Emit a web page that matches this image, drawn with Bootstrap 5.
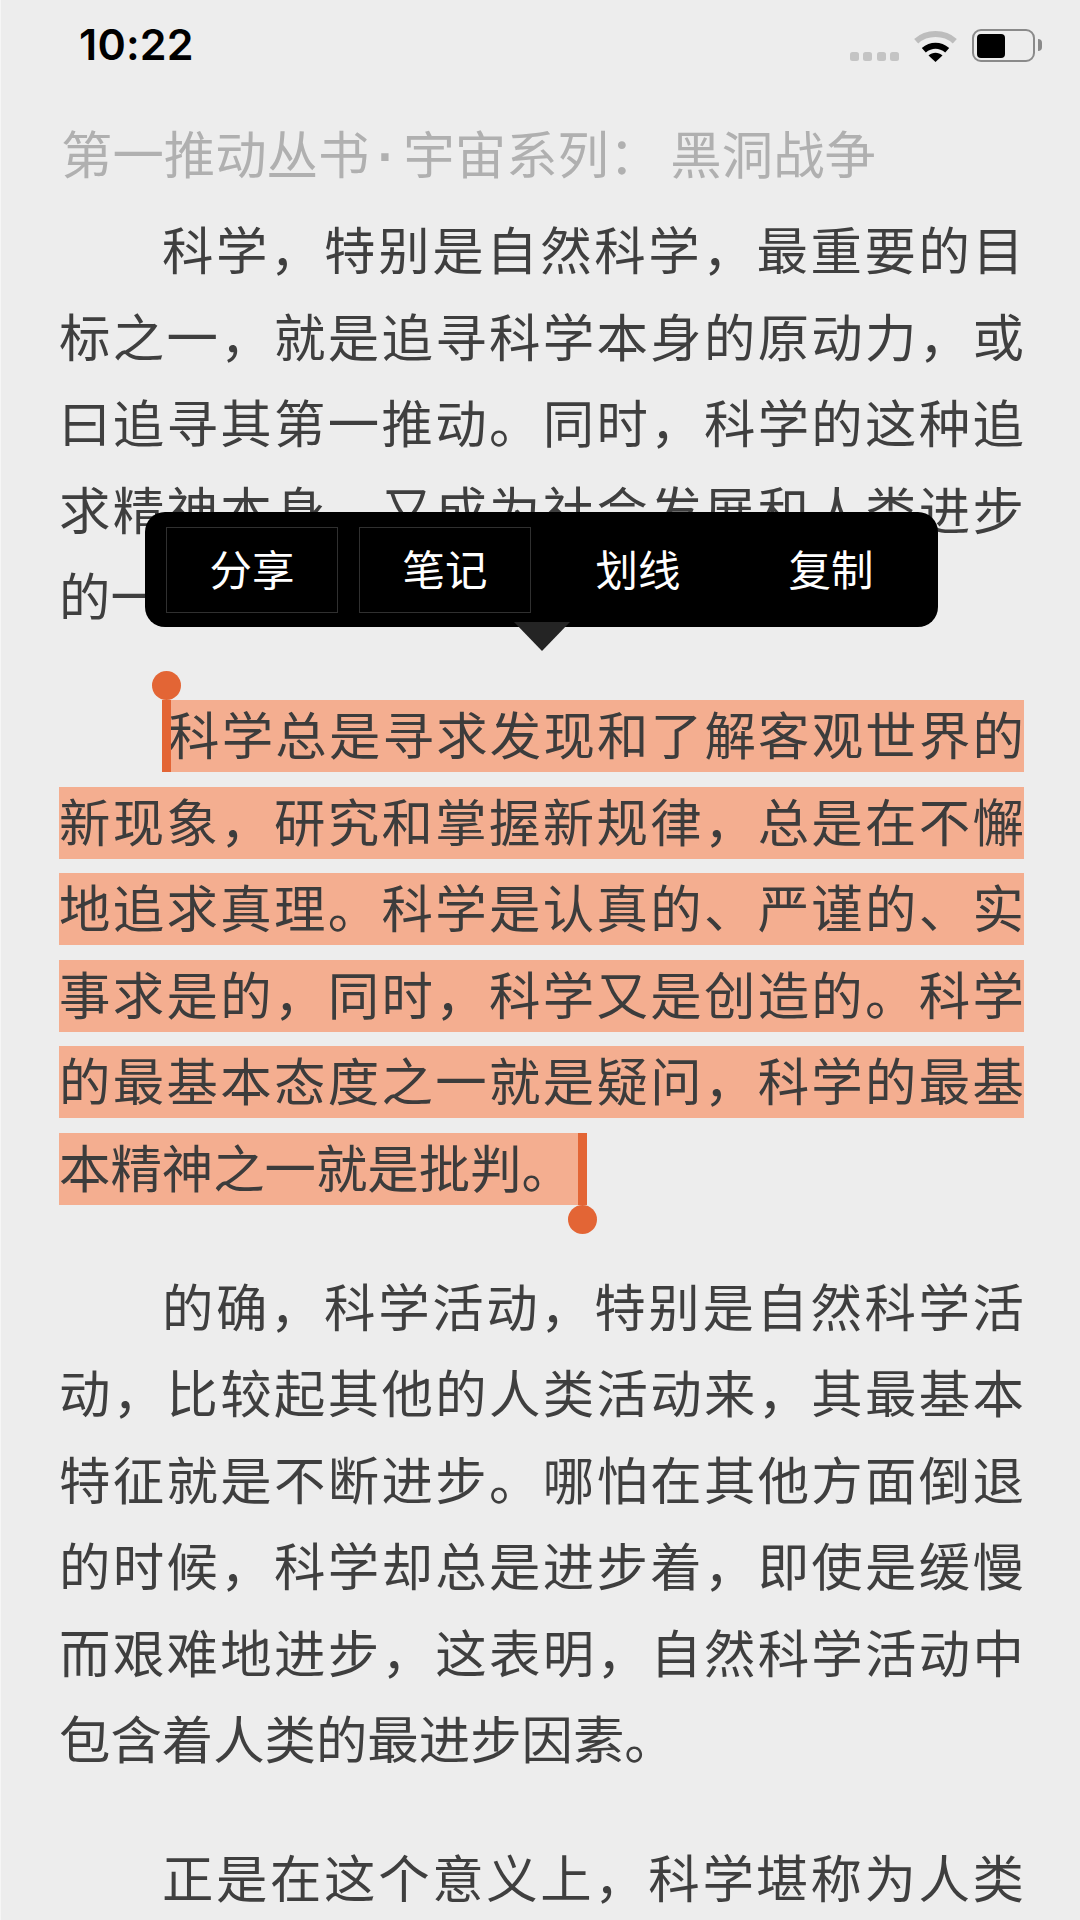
<!DOCTYPE html>
<html lang="zh-CN">
<head>
<meta charset="utf-8">
<title>阅读</title>
<link href="https://cdn.jsdelivr.net/npm/bootstrap@5.3.0/dist/css/bootstrap.min.css" rel="stylesheet">
<style>
html,body{margin:0;height:1920px;overflow:hidden;background:#ededed}
.reader{width:1080px;height:1920px;overflow:hidden;background:#ededed;color:#3f3f3f;font-family:"Noto Sans CJK SC","Liberation Sans",sans-serif;box-shadow:inset 1px 0 #f6f6f6}
.sbar{height:120px;padding:22px 38px 0 79px}
.clock{font-family:Inter,"Liberation Sans",sans-serif;font-weight:600;font-size:43px;line-height:44px;color:#000;letter-spacing:.2px}
.sigdots{gap:4.5px;margin-top:30px;margin-right:15px}
.sigdots i{display:block;width:9px;height:9px;border-radius:2.5px;background:#c4c4c4}
.wifi{width:43px;height:33px;margin-right:15px;margin-top:7px}
.batt{width:63px;height:33px;margin-top:7px;border:2.5px solid #8a8a8a;border-radius:9px;padding:2.5px 3px}
.batt i{display:block;width:28px;height:100%;background:#000;border-radius:4px}
.tip{width:4px;height:12px;margin:17px 0 0 3px;background:#8a8a8a;border-radius:0 5px 5px 0}
.booktitle{font-size:51.4px;line-height:60px;height:60px;margin:2px 0 33px 61px;color:#b0b0b0;font-weight:400;white-space:nowrap}
.booktitle .dot{display:inline-block;width:34px;text-align:center;font-family:"Liberation Sans",sans-serif;font-weight:700}
.booktitle .colon{margin-right:10px}
.para{margin-left:59px;width:965px;margin-bottom:67px}
.ln{display:block;height:72px;line-height:66px;margin-bottom:14.5px;font-size:51.4px;text-align:justify;text-align-last:justify}
.ln.first{padding-left:103px}
.ln.end{text-align-last:left}
.sel{background:#f4ae90;color:#3c3c3c}
.sel.first{margin-left:103px;padding-left:6px}
.sel.last{width:528px}
.bar{width:9px;top:0;bottom:0;background:#e36535}
.knob{width:29px;height:29px;border-radius:50%;background:#e36535}
.knob-top{left:-10px;top:-29px}
.knob-bot{right:-10px;bottom:-29px}
.bar-start{left:0}
.bar-end{right:0}
.popmenu{left:145px;top:512px;width:793px;height:115px;background:#000;border-radius:20px;padding:15px 21px;gap:21px;z-index:5}
.popbtn{width:172px;height:86px;padding:0 0 4px;border-radius:0;border:1.5px solid transparent;background:#000;color:#fff;font-size:42.5px;line-height:1;font-family:"Noto Sans CJK SC",sans-serif;font-weight:400}
.popbtn.boxed{border-color:#303030}
.poparrow{left:514px;top:622px;width:56px;height:29px;z-index:6}
</style>
</head>
<body>
<main class="reader position-relative">
  <header class="sbar d-flex align-items-start">
    <div class="clock">10:22</div>
    <div class="d-flex align-items-start ms-auto">
      <div class="sigdots d-flex"><i></i><i></i><i></i><i></i></div>
      <svg class="wifi" viewBox="0 0 43 33" aria-hidden="true">
        <path d="M2.2 12.2C12.6 2.6 30.4 2.6 40.8 12.2" fill="none" stroke="#bdbdbd" stroke-width="6"/>
        <path d="M7.8 19C16 12 27 12 35.2 19l-4 4.6C25 18.6 18 18.6 11.8 23.6z" fill="#000"/>
        <path d="M14.5 26.4C18.8 22.8 24.2 22.8 28.5 26.4L21.5 33z" fill="#000"/>
      </svg>
      <div class="batt"><i></i></div>
      <div class="tip"></div>
    </div>
  </header>
  <h1 class="booktitle">第一推动丛书<span class="dot">·</span>宇宙系列<span class="colon">：</span>黑洞战争</h1>

  <section class="para">
    <span class="ln first">科学，特别是自然科学，最重要的目</span>
    <span class="ln">标之一，就是追寻科学本身的原动力，或</span>
    <span class="ln">曰追寻其第一推动。同时，科学的这种追</span>
    <span class="ln">求精神本身，又成为社会发展和人类进步</span>
    <span class="ln end">的一种最基本的推动。</span>
  </section>

  <section class="para">
    <span class="ln sel first position-relative"><span class="bar bar-start position-absolute"></span><span class="knob knob-top position-absolute"></span>科学总是寻求发现和了解客观世界的</span>
    <span class="ln sel">新现象，研究和掌握新规律，总是在不懈</span>
    <span class="ln sel">地追求真理。科学是认真的、严谨的、实</span>
    <span class="ln sel">事求是的，同时，科学又是创造的。科学</span>
    <span class="ln sel">的最基本态度之一就是疑问，科学的最基</span>
    <span class="ln sel last end position-relative">本精神之一就是批判。<span class="bar bar-end position-absolute"></span><span class="knob knob-bot position-absolute"></span></span>
  </section>

  <section class="para">
    <span class="ln first">的确，科学活动，特别是自然科学活</span>
    <span class="ln">动，比较起其他的人类活动来，其最基本</span>
    <span class="ln">特征就是不断进步。哪怕在其他方面倒退</span>
    <span class="ln">的时候，科学却总是进步着，即使是缓慢</span>
    <span class="ln">而艰难地进步，这表明，自然科学活动中</span>
    <span class="ln end">包含着人类的最进步因素。</span>
  </section>

  <section class="para">
    <span class="ln first">正是在这个意义上，科学堪称为人类</span>
  </section>

  <div class="popmenu position-absolute d-flex">
    <button type="button" class="btn popbtn boxed">分享</button>
    <button type="button" class="btn popbtn boxed">笔记</button>
    <button type="button" class="btn popbtn">划线</button>
    <button type="button" class="btn popbtn">复制</button>
  </div>
  <svg class="poparrow position-absolute" viewBox="0 0 56 29" aria-hidden="true"><path d="M0 0H56L28 29z" fill="#242424"/></svg>
</main>
<script src="https://cdn.jsdelivr.net/npm/bootstrap@5.3.0/dist/js/bootstrap.bundle.min.js"></script>
</body>
</html>
